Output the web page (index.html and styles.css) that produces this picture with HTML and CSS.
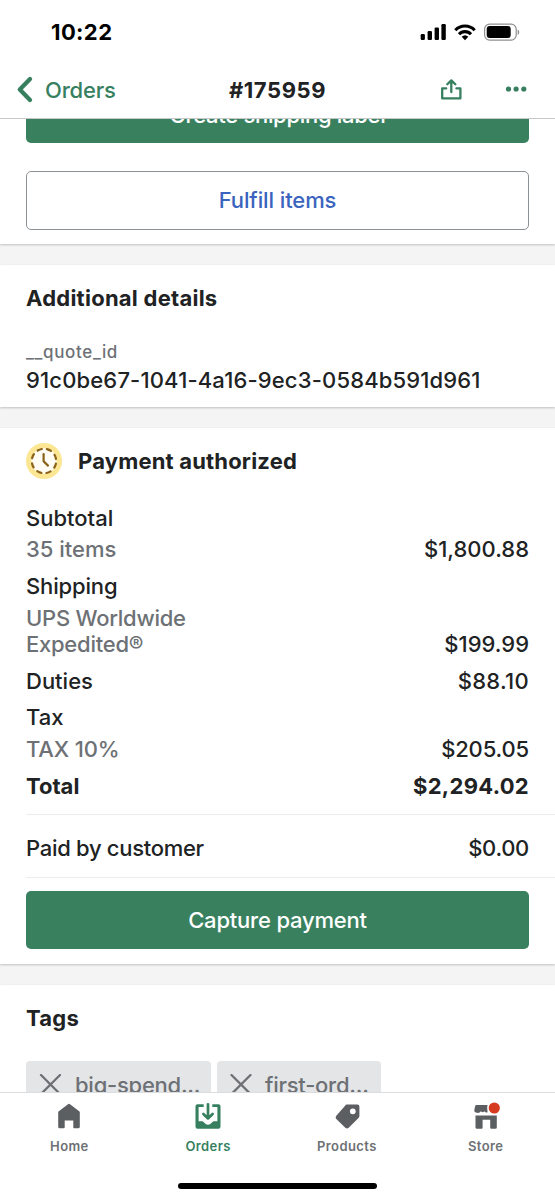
FILE: index.html
```html
<!DOCTYPE html>
<html lang="en">
<head>
<meta charset="utf-8">
<title>Order #175959</title>
<link rel="stylesheet" href="styles.css">
</head>
<body>
<div class="phone">
  <header class="status">
    <span class="time">10:22</span>
    <svg class="status-icons" width="100" height="20" viewBox="0 0 100 20">
      <rect x="0.7" y="12" width="4.2" height="6" rx="1.2"/>
      <rect x="7.6" y="9" width="4.4" height="9" rx="1.2"/>
      <rect x="14.6" y="5.6" width="4.4" height="12.4" rx="1.2"/>
      <rect x="21.4" y="2" width="4.4" height="16" rx="1.2"/>
      <g fill="none" stroke="#000" stroke-width="3.1">
        <path d="M35.300 8.200a13.400 13.400 0 0 1 19.400 0"/>
        <path d="M39 12.200a8.200 8.200 0 0 1 12 0"/>
      </g>
      <path d="M45 18.200l-3.300-3.500a4.800 4.800 0 0 1 6.600 0z"/>
      <rect x="64.6" y="2.1" width="31.6" height="16" rx="5" fill="none" stroke="#8f8f8f" stroke-width="1.2"/>
      <rect x="66.7" y="4.1" width="24" height="12" rx="3"/>
      <path d="M97.700 7.500c2 .9 2 4.600 0 5.400z" fill="#8f8f8f"/>
    </svg>
  </header>
  <nav class="topbar">
    <a class="back">
      <svg width="18" height="28" viewBox="0 0 18 28" fill="none" stroke="#37805f" stroke-width="4.3" stroke-linecap="round" stroke-linejoin="round"><path d="M14 3.100L3.800 13.500l10.200 10.400"/></svg>
      <span class="back-label">Orders</span>
    </a>
    <h1 class="title">#175959</h1>
    <div class="actions">
      <svg width="22" height="22" viewBox="0 0 22 22" fill="none" stroke="#37805f" stroke-width="2.300" stroke-linecap="round" stroke-linejoin="round"><path d="M6.200 9.400H2.200v10h18.200v-10h-4M11.300 13V1.600M7.300 5.300l4-3.900 4 3.900"/></svg>
      <svg width="22" height="22" viewBox="0 0 22 22" fill="#37805f"><circle cx="3.500" cy="10" r="2.600"/><circle cx="11.100" cy="10" r="2.600"/><circle cx="18.800" cy="10" r="2.600"/></svg>
    </div>
  </nav>
  <main class="content">
    <section class="card fulfil">
      <button class="btn primary create"><span>Create shipping label</span></button>
      <button class="btn outline"><span>Fulfill items</span></button>
    </section>
    <section class="card details">
      <h2 class="heading">Additional details</h2>
      <p class="key">__quote_id</p>
      <p class="value">91c0be67-1041-4a16-9ec3-0584b591d961</p>
    </section>
    <section class="card payment">
      <div class="pay-head">
        <svg width="36" height="36" viewBox="0 0 36 36" fill="none">
          <circle cx="18" cy="18" r="18" fill="#fbe793"/>
          <circle cx="18" cy="18" r="12.700" fill="#fffdf3"/>
          <circle cx="18" cy="18" r="12.200" stroke="#8a6116" stroke-width="2.200" stroke-linecap="round" stroke-dasharray="4.400 5.182" stroke-dashoffset="-2.591"/>
          <path d="M17.600 11v7.300l4.400 4.300" stroke="#8a6116" stroke-width="2.200" stroke-linecap="round" stroke-linejoin="round"/>
        </svg>
        <h2 class="heading pay-title">Payment authorized</h2>
      </div>
      <div class="rows">
        <div class="row"><div class="labels"><span>Subtotal</span><span class="sub">35 items</span></div><span class="amt">$1,800.88</span></div>
        <div class="row"><div class="labels"><span class="snug">Shipping</span><span class="sub carrier">UPS Worldwide<br>Expedited®</span></div><span class="amt">$199.99</span></div>
        <div class="row"><div class="labels"><span>Duties</span></div><span class="amt wide">$88.10</span></div>
        <div class="row"><div class="labels"><span>Tax</span><span class="sub snug">TAX 10%</span></div><span class="amt snug">$205.05</span></div>
        <div class="row total"><div class="labels"><span>Total</span></div><span class="amt wide">$2,294.02</span></div>
      </div>
      <div class="row paid"><span class="tight">Paid by customer</span><span class="amt tight">$0.00</span></div>
      <button class="btn primary"><span>Capture payment</span></button>
    </section>
    <section class="card tags">
      <h2 class="heading">Tags</h2>
      <div class="chips">
        <div class="chip chip-a"><svg width="22" height="22" viewBox="0 0 22 22" stroke="#6d7175" stroke-width="2.3" stroke-linecap="round"><path d="M2 1l19 19M21 1l-19 19"/></svg><span>big-spend...</span></div>
        <div class="chip chip-b"><svg width="22" height="22" viewBox="0 0 22 22" stroke="#6d7175" stroke-width="2.3" stroke-linecap="round"><path d="M1.500 1l19 19M20.500 1l-19 19"/></svg><span>first-ord...</span></div>
      </div>
    </section>
  </main>
  <footer class="tabbar">
    <div class="tabs">
      <a class="tab"><svg width="30" height="30" viewBox="0 0 30 30"><path fill="#5c5f62" d="M14 3.200q1-.7 2 0l9.200 7.100q.6.500.6 1.300v14.200q0 1.500-1.500 1.500h-4.200q-.8 0-.8-.8v-7h-8.600v7q0 .8-.8.8H5.700q-1.500 0-1.500-1.500V11.600q0-.8.6-1.300z"/></svg><span>Home</span></a>
      <a class="tab active"><svg width="30" height="30" viewBox="0 0 30 30"><path fill="#37805f" d="M4.500 3.300h6.200v2.600H5.600v14.400h4.100l3 2.700q2.300 1.500 4.600 0l3-2.700h4.100V5.900h-5.100V3.300h6.200q2 0 2 2v20.500q0 2-2 2h-21q-2 0-2-2V5.300q0-2 2-2z"/><path fill="none" stroke="#37805f" stroke-width="2.700" stroke-linecap="round" stroke-linejoin="round" d="M15 3.300v14M10.400 13l4.600 4.400 4.600-4.400"/></svg><span>Orders</span></a>
      <a class="tab"><svg width="30" height="30" viewBox="0 0 30 30"><path fill="#5c5f62" fill-rule="evenodd" d="M14.700 3.500h10.700q2 0 2 2V15q0 1.200-.9 2.100l-9.800 9.600q-1.700 1.500-3.400 0l-9-8.800q-1.500-1.500 0-3.200l8.800-10q.7-1.200 1.600-1.200zM20.800 7.400a2.900 2.900 0 1 0 0 5.800a2.900 2.900 0 1 0 0-5.800z"/></svg><span>Products</span></a>
      <a class="tab"><svg width="30" height="30" viewBox="0 0 30 30"><g fill="#5c5f62"><path d="M5.500 4h11v7.500q-2 .5-3.200-1.200-1.300 1.900-3.400 0Q8.600 12.300 6 11.800q-2.900-.1-2.700-2.800L4.200 5q.3-1 1.300-1z"/><path d="M4.500 14.600h21.300v11.800q0 1.400-1.400 1.400h-4.200q-1 0-1-1v-8h-7.600v8q0 1-1 1H5.900q-1.400 0-1.400-1.400z"/></g><circle cx="23.300" cy="7" r="7" fill="#fff"/><circle cx="23.300" cy="7" r="5.600" fill="#d63a1f"/></svg><span>Store</span></a>
    </div>
    <div class="home-indicator"></div>
  </footer>
</div>
</body>
</html>
```
FILE: styles.css
```css
* { box-sizing: border-box; }
body, h1, h2, p { margin: 0; }
body { font-family: Inter, "Liberation Sans", sans-serif; font-size: 22px; line-height: 26px; font-weight: 500; color: #202223; background: #fff; }
.phone { width: 555px; height: 1200px; display: flex; flex-direction: column; overflow: hidden; }
.status { height: 60px; padding: 3px 35px 0 51px; display: flex; align-items: center; justify-content: space-between; flex: none; }
.time { font-weight: 700; color: #000; letter-spacing: 0.4px; }
.topbar { height: 59px; flex: none; padding: 1px 28px 0; display: grid; grid-template-columns: 1fr auto 1fr; align-items: center; border-bottom: 1px solid #c5c7c8; }
.back { display: flex; align-items: center; gap: 11px; margin-left: -12px; color: #37805f; letter-spacing: -0.2px; }
.title { font-size: 22px; font-weight: 700; line-height: 26px; letter-spacing: 0.6px; }
.actions { display: flex; justify-content: flex-end; gap: 43px; }
.content { flex: 1; min-height: 0; overflow: hidden; background: #f4f4f5; display: flex; flex-direction: column; gap: 21px; }
.card { flex: none; background: #fff; padding: 0 26px; box-shadow: 0 1px 2px #bfc1c4; }
.fulfil { margin-top: -35px; height: 160px; display: flex; flex-direction: column; gap: 28.500px; }
.btn { display: flex; align-items: center; justify-content: center; width: 100%; height: 58px; flex: none; border: 0; border-radius: 5px; padding: 0; font: inherit; }
.primary { background: #39805f; color: #fff; letter-spacing: -0.2px; }
.create { padding-top: 3px; height: 58.500px; letter-spacing: -0.3px; }
.outline { background: #fff; border: 1px solid #8c9196; color: #3a64bd; height: 58.500px; letter-spacing: -0.1px; }
.heading { font-size: 22px; line-height: 26px; font-weight: 700; letter-spacing: 0.25px; }
.pay-title { letter-spacing: 0.18px; }
.details { height: 142px; padding-top: 20px; }
.key { font-size: 17px; line-height: 22px; font-weight: 450; color: #6d7175; margin-top: 30px; letter-spacing: 0.65px; }
.value { margin-top: 4px; letter-spacing: 0.16px; }
.payment { height: 536px; padding-top: 15px; }
.pay-head { display: flex; align-items: center; gap: 16px; height: 36px; }
.rows { display: flex; flex-direction: column; gap: 10.900px; padding-top: 26px; height: 336px; margin-right: -26px; padding-right: 26px; border-bottom: 1px solid #ebeced; }
.row { display: flex; justify-content: space-between; align-items: flex-end; }
.labels { display: flex; flex-direction: column; gap: 5.400px; }
.sub { color: #6d7175; }
.snug { letter-spacing: -0.15px; }
.tight { letter-spacing: -0.3px; }
.wide { letter-spacing: 0.3px; }
.carrier { letter-spacing: -0.25px; }
.total { font-weight: 700; }
.paid { height: 63px; align-items: center; margin: 0 -26px 13px 0; padding: 4px 26px 0 0; border-bottom: 1px solid #ebeced; }
.tags { height: 160px; padding-top: 20px; }
.chips { display: flex; gap: 6px; margin-top: 30px; }
.chip { height: 48px; padding-left: 13px; display: flex; align-items: center; gap: 14px; background: #e4e5e7; border-radius: 4px; color: #6d7175; letter-spacing: -0.25px; }
.chip-a { width: 185px; }
.chip-b { width: 164px; gap: 13px; }
.tabbar { height: 108px; flex: none; background: #fff; border-top: 1px solid #dcddde; display: flex; flex-direction: column; align-items: center; }
.tabs { width: 100%; height: 90px; display: grid; grid-template-columns: repeat(4, 1fr); padding: 8px 0 0; }
.tab { display: flex; flex-direction: column; align-items: center; gap: 6px; font-size: 13px; line-height: 18px; font-weight: 600; color: #6d7175; letter-spacing: 0.4px; }
.active { color: #37805f; }
.home-indicator { width: 199px; height: 6px; border-radius: 3px; background: #000; }
```
